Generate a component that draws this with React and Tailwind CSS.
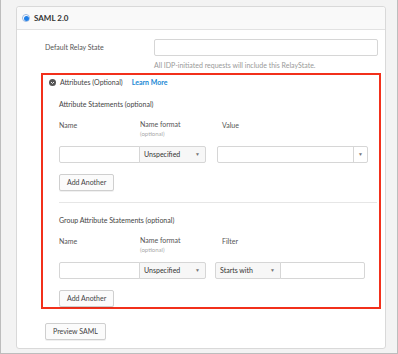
import React from 'react'

const font = { fontFamily: '"Lato", "Liberation Sans", Arial, sans-serif' }

function Caret() {
  return <span className="text-[5px] text-[#777] leading-none">▼</span>
}

function Select({ label, className = '' }) {
  return (
    <div className={`h-[17px] flex items-center justify-between bg-[#f7f7f7] border border-[#d6d6d6] rounded-r-[2px] pl-[4px] pr-[5px] text-[7px] text-[#333] ${className}`}>
      <span>{label}</span>
      <Caret />
    </div>
  )
}

function Btn({ children, className = '' }) {
  return (
    <div className={`h-[17px] inline-flex items-center px-[7px] bg-[#fbfbfb] border border-[#cfcfcf] rounded-[2px] shadow-[0_1px_0_rgba(0,0,0,0.06)] text-[7px] text-[#444] ${className}`}>
      {children}
    </div>
  )
}

function ColHeads({ third }) {
  return (
    <div className="flex text-[7px] text-[#555] h-[26px]">
      <div className="w-[81px]">Name</div>
      <div className="w-[82px] leading-[9px]">
        <div>Name format</div>
        <div className="text-[6px] text-[#aaa]">(optional)</div>
      </div>
      <div>{third}</div>
    </div>
  )
}

export default function App() {
  return (
    <div style={font} className="w-[398px] h-[354px] bg-[#f3f3f3] border-x border-b border-[#bdbdbd] pt-[6px] pl-[15px] overflow-hidden">
      <div className="w-[370px] h-[343px] bg-white border border-[#d9d9d9] rounded-[3px] flex flex-col">
        {/* header */}
        <div className="h-[23px] bg-[#f9f9f9] border-b border-[#e2e2e2] rounded-t-[3px] flex items-center pl-[5px] gap-[4px]">
          <div className="w-[8px] h-[8px] rounded-full border border-[#9bb8e0] bg-white flex items-center justify-center">
            <div className="w-[5px] h-[5px] rounded-full bg-[#1e7fe8]" />
          </div>
          <span className="text-[8px] font-bold text-[#333]">SAML 2.0</span>
        </div>

        <div className="pt-[9px] pl-[24px]">
          {/* relay state */}
          <div className="flex">
            <div className="w-[113px] pl-[4px] pt-[3px] text-[7px] text-[#555]">Default Relay State</div>
            <div>
              <div className="w-[224px] h-[17px] border border-[#d6d6d6] rounded-[2px] bg-white" />
              <div className="mt-[4px] text-[7px] text-[#999]">All IDP-initiated requests will include this RelayState.</div>
            </div>
          </div>

          {/* attributes box */}
          <div className="mt-[2px] w-[340px] h-[236px] border-2 border-[#f2301b] pl-[16px] pt-[2px]">
            <div className="flex items-center h-[12px]">
              <div className="w-[7px] h-[7px] rounded-full bg-[#555] flex items-center justify-center -ml-[10px] mr-[4px]">
                <svg width="5" height="5" viewBox="0 0 10 10"><path d="M2 4 L5 7 L8 4" stroke="white" strokeWidth="1.8" fill="none" /></svg>
              </div>
              <span className="text-[7px] text-[#444]">Attributes (Optional)</span>
              <span className="ml-[9px] text-[7px] text-[#1a88d4] font-bold">Learn More</span>
            </div>
            <div className="mt-[10px] text-[7px] text-[#444] h-[12px]">Attribute Statements (optional)</div>

            <div className="mt-[9px]"><ColHeads third="Value" /></div>
            <div className="flex items-center">
              <div className="w-[81px] h-[17px] border border-[#d6d6d6] rounded-l-[2px] bg-white" />
              <Select label="Unspecified" className="w-[67px] -ml-px" />
              <div className="ml-[11px] w-[151px] h-[17px] border border-[#d6d6d6] rounded-[2px] bg-white flex justify-end">
                <div className="w-[14px] h-full border-l border-[#d6d6d6] flex items-center justify-center"><Caret /></div>
              </div>
            </div>
            <Btn className="mt-[11px]">Add Another</Btn>

            <div className="mt-[11px] mr-[2px] border-t border-[#e6e6e6]" />

            <div className="mt-[12px] text-[7px] text-[#444] h-[12px]">Group Attribute Statements (optional)</div>
            <div className="mt-[9px]"><ColHeads third="Filter" /></div>
            <div className="flex items-center">
              <div className="w-[81px] h-[17px] border border-[#d6d6d6] rounded-l-[2px] bg-white" />
              <Select label="Unspecified" className="w-[67px] -ml-px" />
              <Select label="Starts with" className="ml-[9px] w-[66px] rounded-l-[2px] rounded-r-none" />
              <div className="w-[85px] h-[17px] border border-[#d6d6d6] -ml-px rounded-r-[2px] bg-white" />
            </div>
            <Btn className="mt-[11px]">Add Another</Btn>
          </div>

          <Btn className="mt-[14px] ml-[4px] px-[6px]">Preview SAML</Btn>
        </div>
      </div>
    </div>
  )
}
